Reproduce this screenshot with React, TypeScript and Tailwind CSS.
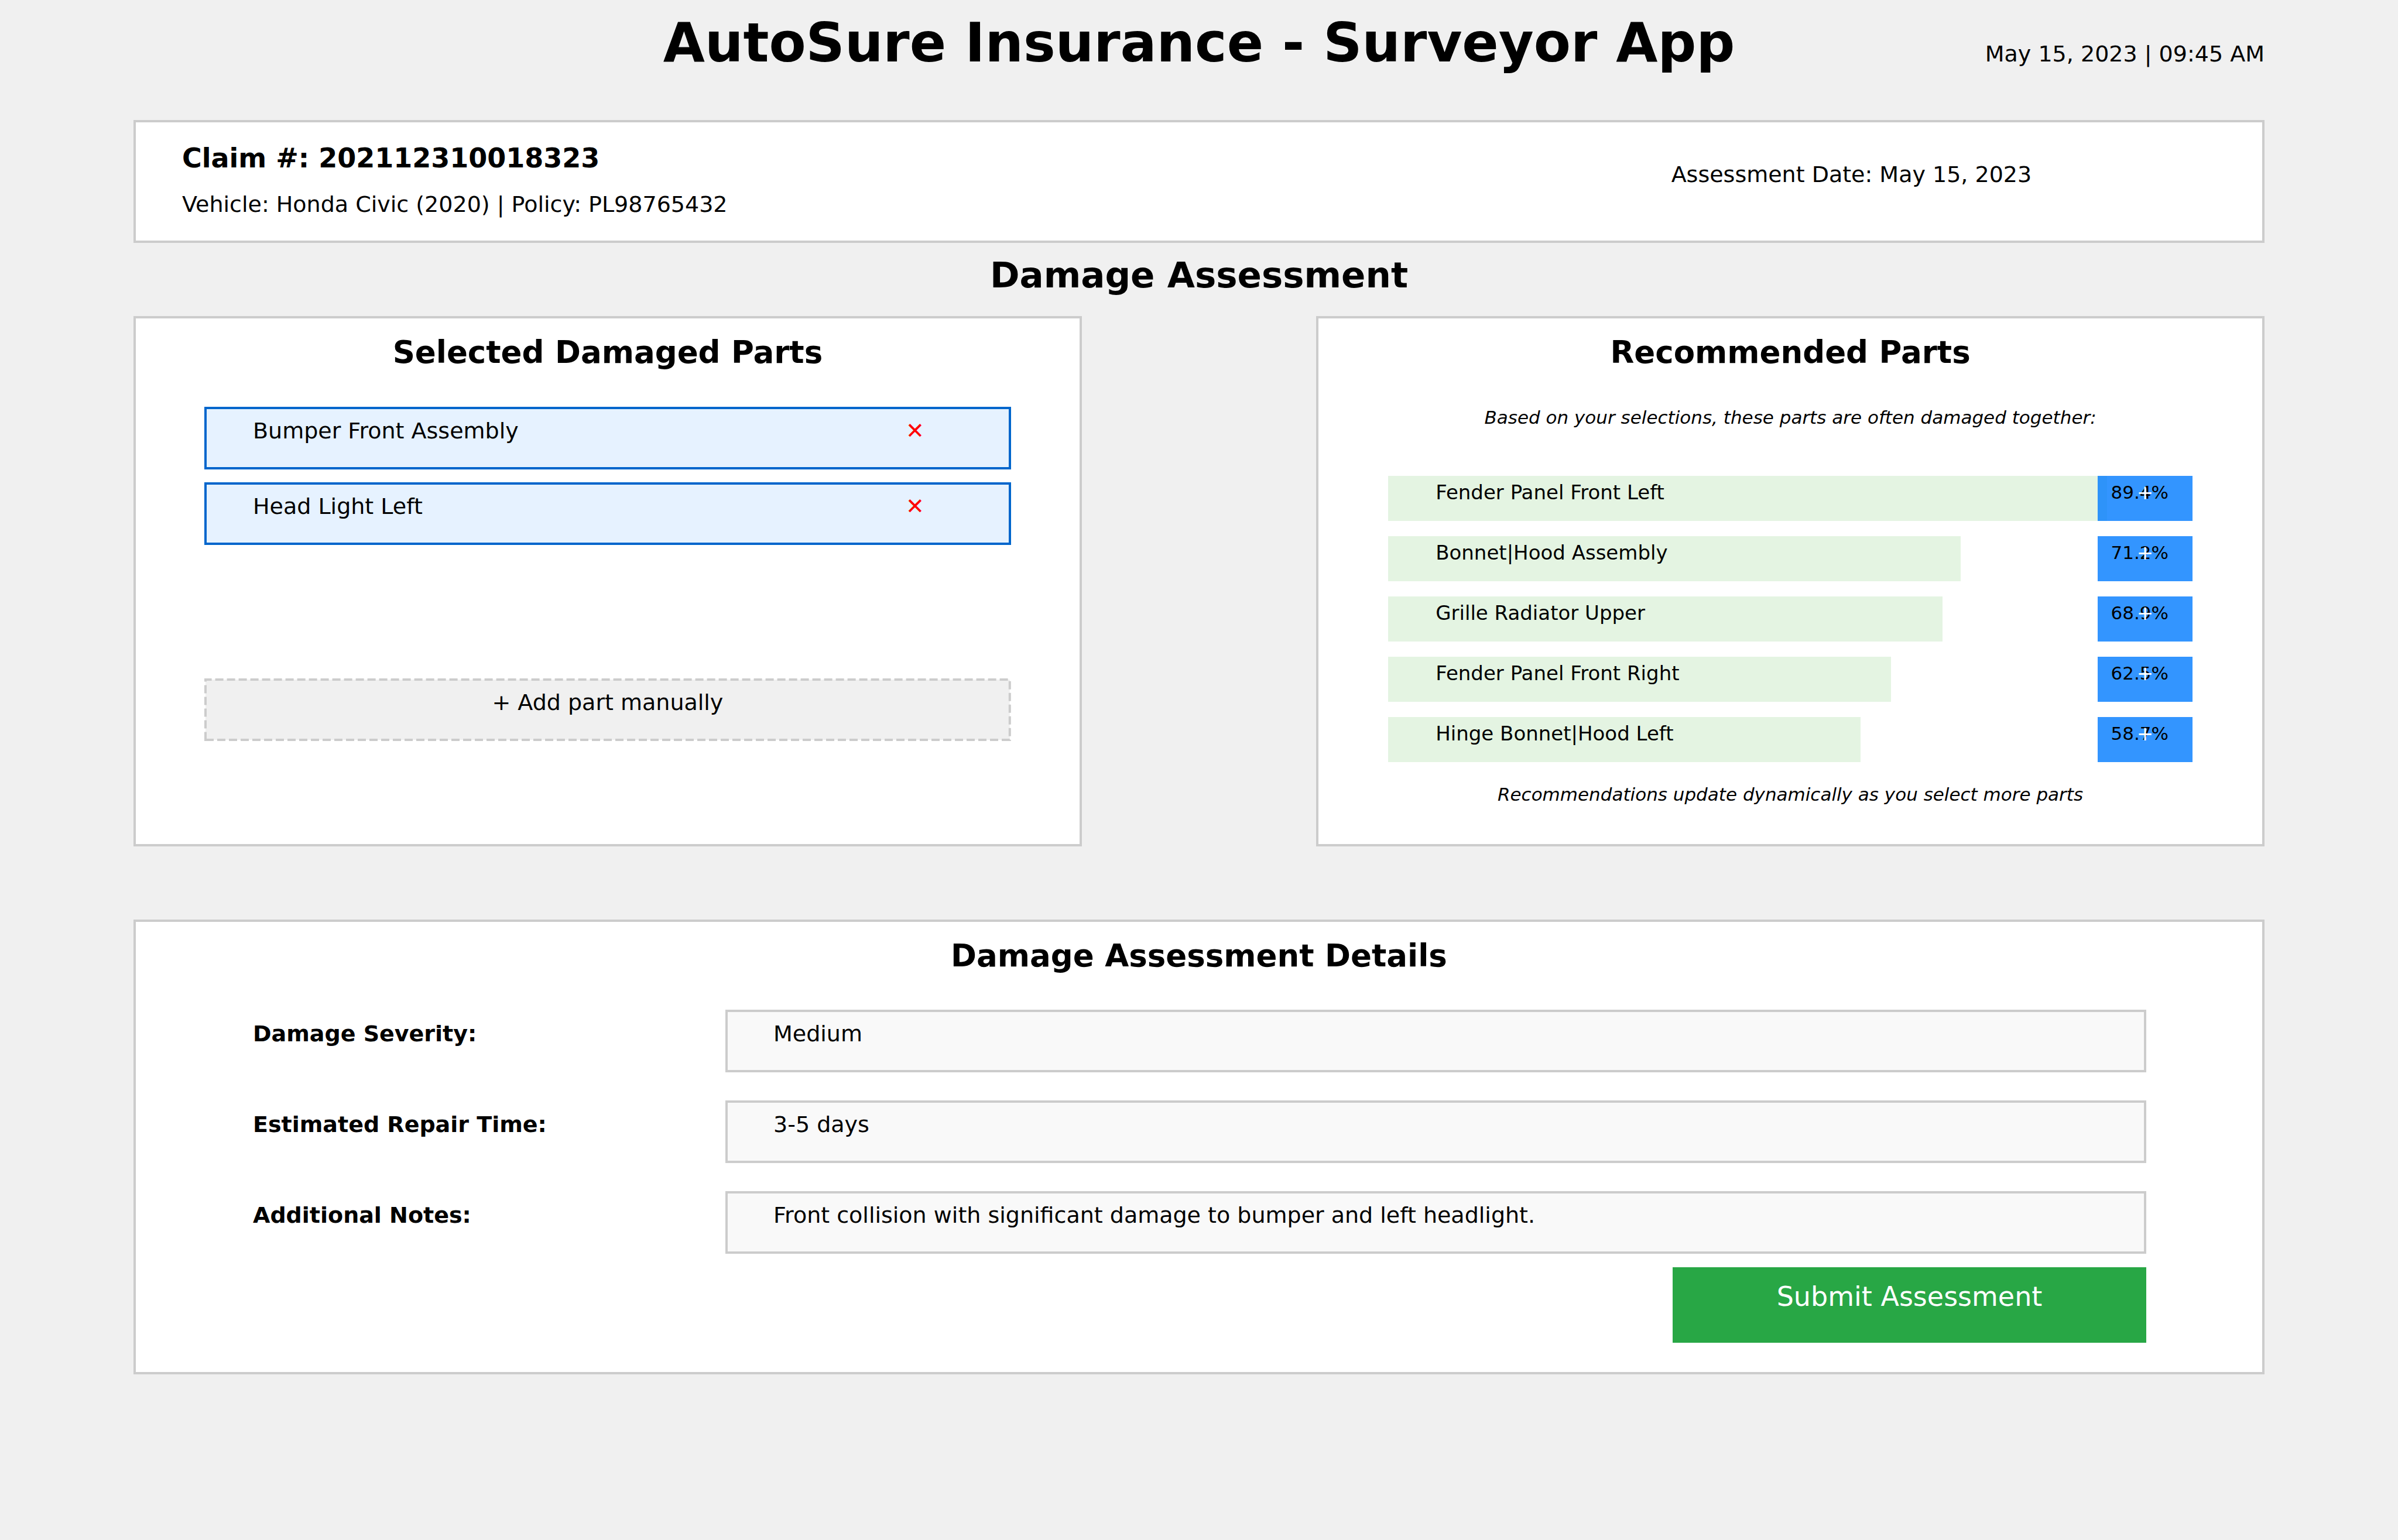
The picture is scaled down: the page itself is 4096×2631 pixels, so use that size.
import React from "react";

const selectedParts = ["Bumper Front Assembly", "Head Light Left"];

const recommendedParts = [
  { name: "Fender Panel Front Left", score: 89.4 },
  { name: "Bonnet|Hood Assembly", score: 71.2 },
  { name: "Grille Radiator Upper", score: 68.9 },
  { name: "Fender Panel Front Right", score: 62.5 },
  { name: "Hinge Bonnet|Hood Left", score: 58.7 },
];

const details = [
  { id: "severity", label: "Damage Severity:", value: "Medium" },
  { id: "repair-time", label: "Estimated Repair Time:", value: "3-5 days" },
  {
    id: "notes",
    label: "Additional Notes:",
    value: "Front collision with significant damage to bumper and left headlight.",
  },
];

function Card({ title, className, children }: { title: string; className: string; children: React.ReactNode }) {
  return (
    <section className={`border-4 border-[#cccccc] bg-white pt-[26px] ${className}`}>
      <h3 className="text-center text-[53px] leading-[64px] font-bold">{title}</h3>
      {children}
    </section>
  );
}

function SelectedPart({ name }: { name: string }) {
  return (
    <li className="flex h-[107px] items-start justify-between border-4 border-[#0066cc] bg-[#e6f2ff] pt-[13px] pr-[136px] pl-[79px]">
      <span>{name}</span>
      <button type="button" aria-label={`Remove ${name}`} className="w-12 text-center text-[#ff0000]">
        ✕
      </button>
    </li>
  );
}

function RecommendedPart({ name, score }: { name: string; score: number }) {
  return (
    <li className="relative flex h-[77px] items-start justify-between text-[34px] leading-[44px]">
      <div className="absolute inset-y-0 left-0 bg-[#e4f4e2]" style={{ width: `${score}%` }} />
      <span className="relative pt-[6px] pl-[81px]">{name}</span>
      <button
        type="button"
        aria-label={`Add ${name}`}
        className="relative flex h-full w-[162px] items-baseline justify-center bg-[#007bff]/80 pt-[6px] text-white"
      >
        <span className="absolute inset-x-0 pr-[41px] text-right text-[31px] text-black">{score}%</span>
        <span className="relative">+</span>
      </button>
    </li>
  );
}

export default function App() {
  return (
    <div className="min-h-screen bg-[#f0f0f0] px-[228px] pb-[283px] font-['DejaVu_Sans',sans-serif] text-[38px] leading-[48px] text-black">
      <header className="grid h-[205px] grid-cols-[1fr_auto_1fr] items-baseline pt-7">
        <h1 className="col-start-2 text-[92px] leading-[92px] font-bold">AutoSure Insurance - Surveyor App</h1>
        <time className="text-right">May 15, 2023 | 09:45 AM</time>
      </header>

      <main>
        <section className="grid h-[210px] grid-cols-[63fr_25fr] border-4 border-[#cccccc] bg-white pl-[79px]">
          <div className="flex flex-col gap-[25px] pt-[31px]">
            <p className="text-[46px] leading-[60px] font-bold">Claim #: 202112310018323</p>
            <p>Vehicle: Honda Civic (2020) | Policy: PL98765432</p>
          </div>
          <p className="pt-[65px]">Assessment Date: May 15, 2023</p>
        </section>

        <h2 className="h-[125px] pt-[19px] text-center text-[61px] leading-[72px] font-bold">Damage Assessment</h2>

        <div className="grid grid-cols-2 gap-x-[11%]">
          <Card title="Selected Damaged Parts" className="min-h-[906px] px-[117px]">
            <ul className="mt-[61px] flex flex-col gap-[22px]">
              {selectedParts.map((name) => (
                <SelectedPart key={name} name={name} />
              ))}
            </ul>
            <button type="button" className="relative mt-[228px] flex h-[107px] w-full items-start justify-center pt-[17px]">
              <svg aria-hidden="true" className="absolute inset-[2px] h-[103px] w-[calc(100%-4px)] -scale-y-100 overflow-visible">
                <rect width="100%" height="100%" fill="#f0f0f0" stroke="#cccccc" strokeWidth="4" strokeDasharray="14 6" />
              </svg>
              <span className="relative">+ Add part manually</span>
            </button>
          </Card>

          <Card title="Recommended Parts" className="min-h-[906px] px-[119px]">
            <p className="mt-[59px] text-center text-[31px] leading-[40px] italic">
              Based on your selections, these parts are often damaged together:
            </p>
            <ul className="mt-[80px] flex flex-col gap-[26px]">
              {recommendedParts.map((part) => (
                <RecommendedPart key={part.name} {...part} />
              ))}
            </ul>
            <p className="mt-[35px] text-center text-[31px] leading-[40px] italic">
              Recommendations update dynamically as you select more parts
            </p>
          </Card>
        </div>

        <Card title="Damage Assessment Details" className="mt-[125px] min-h-[777px] px-[198px]">
          <form className="mt-[60px] flex flex-col" onSubmit={(event) => event.preventDefault()}>
            <div className="flex flex-col gap-12">
              {details.map(({ id, label, value }) => (
                <div key={id} className="grid grid-cols-[25%_75%] items-start">
                  <label htmlFor={id} className="pt-[17px] pl-[2px] font-bold">
                    {label}
                  </label>
                  <input
                    id={id}
                    type="text"
                    defaultValue={value}
                    className="h-[107px] w-full border-4 border-[#cccccc] bg-[#f9f9f9] pt-[13px] pb-[38px] pl-[78px]"
                  />
                </div>
              ))}
            </div>
            <button
              type="submit"
              className="mt-[23px] flex h-[129px] w-1/4 items-start justify-center self-end bg-[#28a745] pt-5 text-[46px] leading-[60px] text-white"
            >
              Submit Assessment
            </button>
          </form>
        </Card>
      </main>
    </div>
  );
}
